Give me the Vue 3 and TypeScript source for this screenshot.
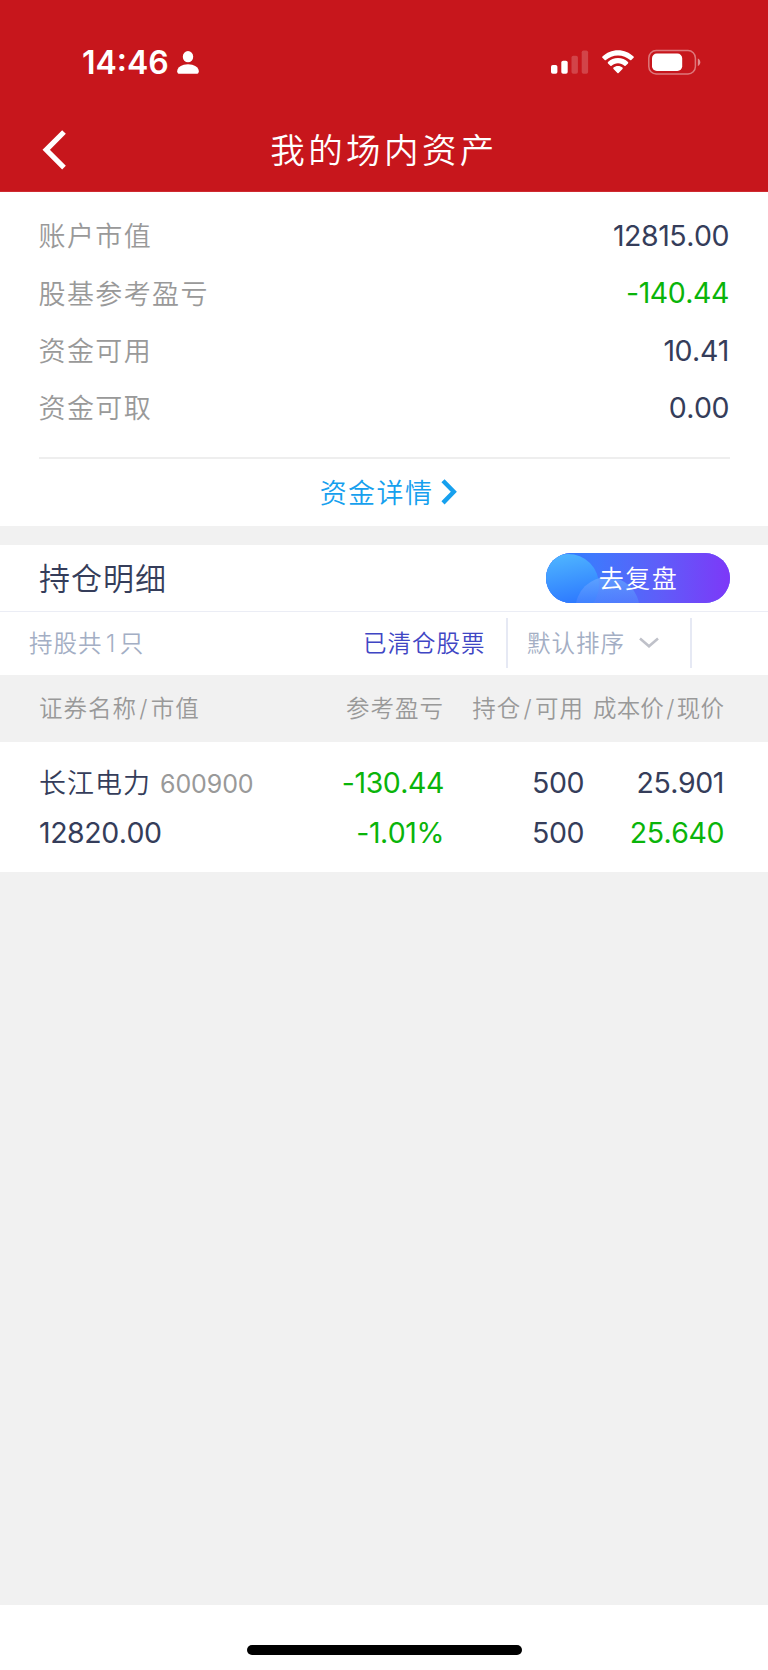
<script setup lang="ts">
interface SummaryRow {
  label: string
  value: string
  down?: boolean
}

interface Holding {
  name: string
  code: string
  marketValue: string
  profit: string
  profitRate: string
  position: string
  available: string
  cost: string
  price: string
}

const summary: SummaryRow[] = [
  { label: '账户市值', value: '12815.00' },
  { label: '股基参考盈亏', value: '-140.44', down: true },
  { label: '资金可用', value: '10.41' },
  { label: '资金可取', value: '0.00' },
]

const holdings: Holding[] = [
  {
    name: '长江电力',
    code: '600900',
    marketValue: '12820.00',
    profit: '-130.44',
    profitRate: '-1.01%',
    position: '500',
    available: '500',
    cost: '25.901',
    price: '25.640',
  },
]
</script>

<template>
  <div class="screen">
    <header class="top">
      <div class="status">
        <div class="clock">
          <span class="time">14:46</span>
          <svg class="person" width="22" height="23" viewBox="0 0 22 23">
            <ellipse cx="11" cy="5.7" rx="5.2" ry="5.6" fill="#fff" />
            <path d="M0.2 20.2C0.2 16.4 5 13.2 11 13.2s10.8 3.2 10.8 7c0 1.6-.8 2.6-2.5 2.6H2.7C1 22.8.2 21.8 0.2 20.2z" fill="#fff" />
          </svg>
        </div>
        <div class="signals">
          <svg class="cell" width="38" height="24" viewBox="0 0 38 24">
            <rect x="0" y="15" width="6.4" height="8.8" rx="1.8" fill="#fff" />
            <rect x="10.3" y="10.8" width="6.4" height="13" rx="1.8" fill="#fff" />
            <rect x="20.5" y="5.8" width="6.4" height="18" rx="1.8" fill="#fff" opacity=".2" />
            <rect x="30.7" y="0.5" width="6.4" height="23.3" rx="1.8" fill="#fff" opacity=".2" />
          </svg>
          <svg class="wifi" width="32" height="24" viewBox="0 0 32 24">
            <path d="M16 0.2c6 0 11.500 2.300 15.600 6.300.4.400.4.900 0 1.300l-2.300 2.300c-.3.300-.8.300-1.200 0C24.900 7.100 20.600 5.400 16 5.400S7.100 7.100 3.900 10.100c-.4.300-.9.300-1.200 0L.4 7.800C0 7.400 0 6.900.4 6.500 4.500 2.500 10 .2 16 .2z" fill="#fff" />
            <path d="M16 8.100c3.900 0 7.400 1.500 10 4 .4.400.4.900 0 1.300l-2.400 2.300c-.3.300-.8.300-1.200 0-1.700-1.500-3.900-2.400-6.400-2.400s-4.700.9-6.400 2.400c-.4.300-.9.300-1.200 0L6 13.400c-.4-.4-.4-.9 0-1.300 2.600-2.500 6.100-4 10-4z" fill="#fff" />
            <path d="M16 15.900c1.800 0 3.400.7 4.500 1.700.4.400.4.900 0 1.300l-3.900 4c-.4.400-.8.400-1.200 0l-3.900-4c-.4-.4-.4-.9 0-1.300 1.100-1 2.700-1.700 4.500-1.700z" fill="#fff" />
          </svg>
          <svg class="battery" width="53" height="26" viewBox="0 0 53 26">
            <rect x="0.8" y="1.6" width="46.600" height="23.400" rx="7.400" fill="none" stroke="#fff" stroke-width="1.500" opacity=".42" />
            <rect x="4" y="4.6" width="30.200" height="17.400" rx="4.800" fill="#fff" />
            <path d="M49.800 9.500v7.600c1.500-.6 2.500-2.100 2.500-3.800S51.300 10.100 49.800 9.500z" fill="#fff" opacity=".5" />
          </svg>
        </div>
      </div>
      <nav class="nav">
        <svg class="back" width="26" height="42" viewBox="0 0 26 42">
          <path d="M22 3L4.200 20.800 22 38.600" fill="none" stroke="#fff" stroke-width="5.200" />
        </svg>
        <h1>我的场内资产</h1>
      </nav>
    </header>

    <section class="summary">
      <dl>
        <div v-for="row in summary" :key="row.label" class="line">
          <dt>{{ row.label }}</dt>
          <dd class="num" :class="{ down: row.down }">{{ row.value }}</dd>
        </div>
      </dl>
      <a class="more">
        <span>资金详情</span>
        <svg width="16" height="26" viewBox="0 0 16 26">
          <path d="M2 1.700L12.800 12.800 2 23.900" fill="none" stroke="#16a0ee" stroke-width="4.4" />
        </svg>
      </a>
    </section>

    <section class="positions">
      <div class="heading">
        <h2>持仓明细</h2>
        <button class="review">
          <svg class="bubbles" width="184" height="50" viewBox="0 0 184 50">
            <defs>
              <linearGradient id="pill" x1="0" y1="0" x2="1" y2="0">
                <stop offset="0" stop-color="#2c7bff" />
                <stop offset=".25" stop-color="#3e79fd" />
                <stop offset=".6" stop-color="#5d5ff9" />
                <stop offset="1" stop-color="#7d38f8" />
              </linearGradient>
              <linearGradient id="bubble" x1=".3" y1="0" x2=".5" y2="1">
                <stop offset="0" stop-color="#4fb6ff" />
                <stop offset=".8" stop-color="#2e7bff" />
              </linearGradient>
              <linearGradient id="glow" x1="0" y1="0" x2="0" y2="1">
                <stop offset="0" stop-color="#69a8ff" stop-opacity=".75" />
                <stop offset=".45" stop-color="#5587ff" stop-opacity=".45" />
              </linearGradient>
            </defs>
            <rect width="184" height="50" fill="url(#pill)" />
            <circle cx="22" cy="32" r="31" fill="url(#bubble)" />
            <circle cx="61.500" cy="56" r="32" fill="url(#glow)" />
          </svg>
          <span>去复盘</span>
        </button>
      </div>

      <div class="filters">
        <span class="count">持股共<i>1</i>只</span>
        <span class="cleared">已清仓股票</span>
        <div class="sort">
          <span>默认排序</span>
          <svg width="20" height="12" viewBox="0 0 20 12">
            <path d="M1 1.500L10 9.200 19 1.500" fill="none" stroke="#bfc1c9" stroke-width="2.600" />
          </svg>
        </div>
      </div>

      <div class="grid head">
        <span>证券名称<i>/</i>市值</span>
        <span>参考盈亏</span>
        <span>持仓<i>/</i>可用</span>
        <span class="tight">成本价<i>/</i>现价</span>
      </div>

      <div v-for="h in holdings" :key="h.code" class="holding">
        <div class="grid">
          <span class="stock">{{ h.name }}<small>{{ h.code }}</small></span>
          <span class="num down">{{ h.profit }}</span>
          <span class="num">{{ h.position }}</span>
          <span class="num">{{ h.cost }}</span>
        </div>
        <div class="grid">
          <span class="num">{{ h.marketValue }}</span>
          <span class="num down">{{ h.profitRate }}</span>
          <span class="num">{{ h.available }}</span>
          <span class="num down">{{ h.price }}</span>
        </div>
      </div>
    </section>

    <footer class="home"><div class="bar"></div></footer>
  </div>
</template>

<style>
body {
  margin: 0;
  background: #f1f1f1;
}
</style>

<style scoped>
.screen {
  width: 768px;
  height: 1670px;
  display: flex;
  flex-direction: column;
  background: #f1f1f1;
  color: #353d5a;
  font-family: Inter, "Noto Sans CJK SC", sans-serif;
  font-weight: 350;
  overflow: hidden;
}
h1, h2, dl, dd { margin: 0; font-weight: 350; }
i { font-style: normal; }
svg { display: block; flex: none; }

.top {
  box-sizing: border-box;
  height: 192px;
  flex: none;
  background: #c7161c;
  color: #fff;
  border-bottom: 1px solid #cf2a30;
}
.status {
  height: 108px;
  display: flex;
  justify-content: space-between;
  padding: 0 67px 0 82px;
}
.clock { display: flex; }
.time {
  font-size: 32px;
  font-weight: 600;
  line-height: 40px;
  margin-top: 43px;
  width: 95px;
  white-space: nowrap;
}
.person { margin-top: 51px; }
.signals { display: flex; }
.cell { margin: 50px 13px 0 0; }
.wifi { margin: 50px 14px 0 0; }
.battery { margin-top: 49px; }
.nav {
  height: 84px;
  display: grid;
  grid-template-columns: 60px 1fr 60px;
}
.back { margin: 21px 0 0 42px; }
h1 {
  font-size: 34.5px;
  line-height: 86px;
  letter-spacing: 3.4px;
  text-align: center;
  height: 83px;
}

.summary {
  box-sizing: border-box;
  height: 333.5px;
  flex: none;
  padding: 15px 38.5px 0;
  background: #fff;
}
dl {
  height: 250px;
  border-bottom: 2px solid #eee;
}
.line {
  height: 57.3px;
  display: flex;
  align-items: center;
  justify-content: space-between;
}
dt {
  color: #999;
  font-size: 27px;
  letter-spacing: 1.4px;
  padding-bottom: 1.5px;
}
.num {
  font-size: 28.5px;
  font-weight: 390;
  font-kerning: none;
  letter-spacing: -.45px;
}
.num.down { color: #0ab40a; }
.line .num { padding-right: .5px; }
.more {
  display: flex;
  align-items: center;
  justify-content: center;
  gap: 8px;
  height: 66px;
  padding-left: 9px;
  color: #16a0ee;
  font-size: 27px;
  letter-spacing: 1.4px;
}
.more span { padding-bottom: 1px; }

.positions {
  margin-top: 19px;
  background: #fff;
}
.heading {
  box-sizing: border-box;
  height: 67px;
  display: flex;
  align-items: center;
  justify-content: space-between;
  padding: 0 38px 0 39px;
  border-bottom: 1.5px solid #ebedf5;
}
h2 { font-size: 31px; letter-spacing: 1px; line-height: 64px; padding-top: 2px; }
.review {
  position: relative;
  width: 184px;
  height: 50px;
  padding: 0;
  border: 0;
  border-radius: 25px;
  overflow: hidden;
  background: #4d6cfb;
  color: #fff;
  font: 350 25px/48px "Noto Sans CJK SC", sans-serif;
  letter-spacing: 1.5px;
}
.bubbles { position: absolute; inset: 0; }
.review span { position: relative; display: block; height: 50px; padding-left: 1px; }

.filters {
  height: 63.5px;
  display: flex;
  align-items: center;
  font-size: 23.5px;
  letter-spacing: 1px;
}
.filters span { padding-bottom: 2px; }
.count { width: 334px; margin-left: 29px; color: #a3aec4; }
.count i { margin: 0 3.5px; }
.cleared { width: 143px; color: #3f46c4; }
.sort {
  box-sizing: border-box;
  display: flex;
  align-items: center;
  justify-content: space-between;
  width: 185.5px;
  height: 50px;
  padding: 0 31px 0 19px;
  border: 0 solid #e6e9f4;
  border-width: 0 2px;
  color: #a3aec4;
}

.grid {
  display: grid;
  grid-template-columns: 240px 165px 140px 140px;
  padding-left: 39px;
  align-items: center;
}
.grid > * { white-space: nowrap; justify-self: end; }
.grid > :first-child { justify-self: start; }
.head {
  height: 67px;
  background: #f1f1f1;
  color: #999;
  font-size: 23.5px;
  letter-spacing: 1px;
}
.head span { padding-bottom: 3px; }
.head i { margin: 0 2.3px; }
.head .tight { letter-spacing: .1px; }
.holding { height: 130px; padding-top: 16px; box-sizing: border-box; }
.holding .grid { height: 49.5px; }
.stock { font-size: 27px; letter-spacing: 1px; padding-bottom: 3px; }
.stock small {
  margin-left: 9px;
  color: #999;
  font-size: 25px;
  font-weight: 380;
  letter-spacing: -.1px;
}

.home {
  display: flex;
  height: 65px;
  flex: none;
  margin-top: auto;
  background: #fff;
}
.bar {
  width: 275px;
  height: 10px;
  margin: 39.5px auto 0;
  border-radius: 5px;
  background: #000;
}
</style>
